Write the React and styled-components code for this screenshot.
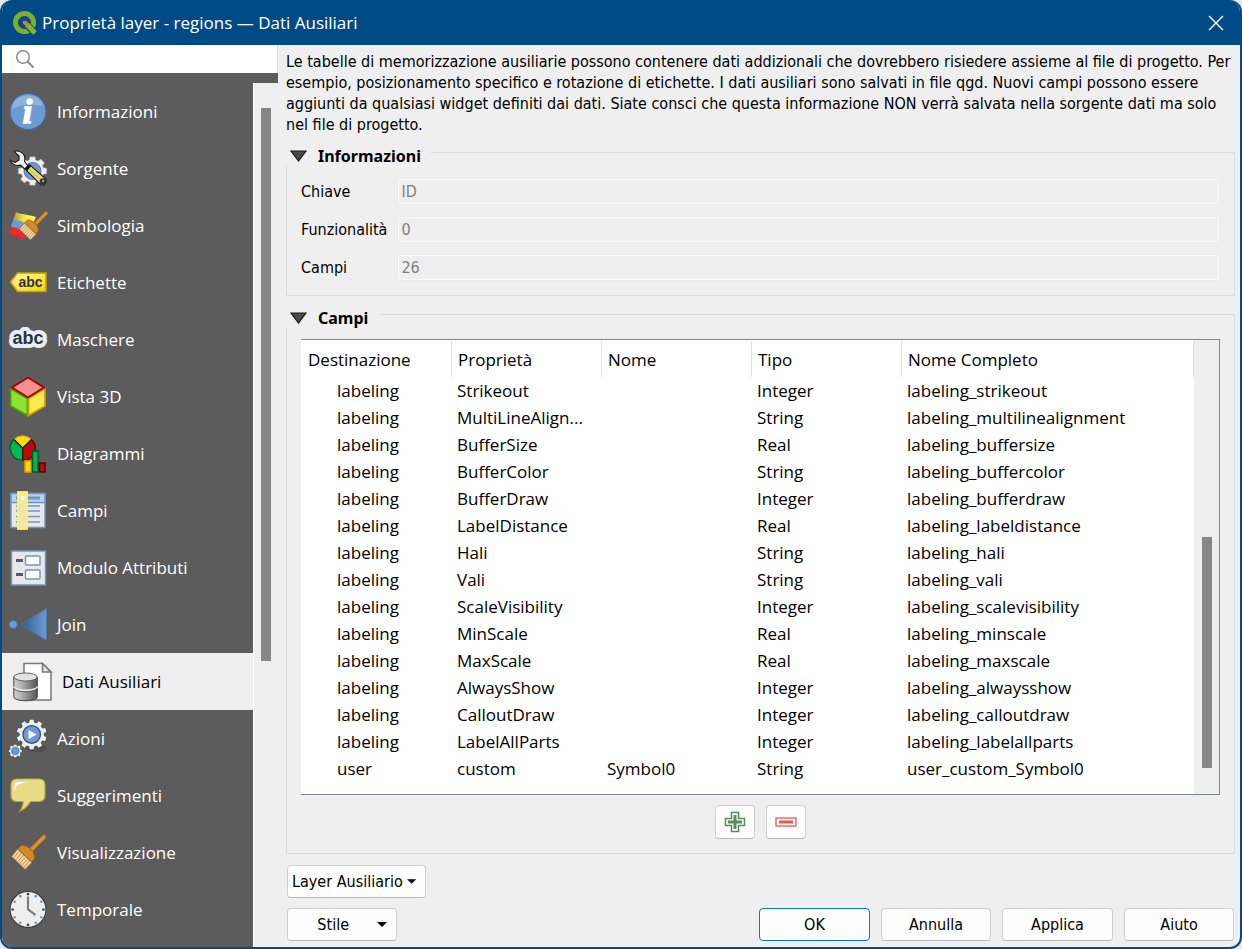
import React, { useState } from 'react';
import styled, { createGlobalStyle, css } from 'styled-components';

const uiFont = '"Open Sans", "Noto Sans", sans-serif';
const formFont = '"DejaVu Sans Condensed", "Noto Sans", sans-serif';

const GlobalStyle = createGlobalStyle`
    * {
        box-sizing: border-box;
    }

    body {
        margin: 0;
        background: #e6e9ec;
        color: #000;
        font-family: ${formFont};
        font-size: 16px;
    }

    button, input {
        font: inherit;
        color: inherit;
    }
`;

const Window = styled.div`
    display: flex;
    flex-direction: column;
    min-height: 100vh;
    border: 2px solid #004b85;
    border-top: 0;
    border-radius: 12px;
    overflow: hidden;
    background: #efefef;
`;

const TitleBar = styled.header`
    display: flex;
    align-items: center;
    gap: 4px;
    height: 45px;
    padding: 0 15px 0 10px;
    background: #004b85;
    color: #fff;
`;

const Title = styled.h1`
    flex: 1;
    margin: 0;
    font-family: ${uiFont};
    font-size: 17px;
    font-weight: 400;
`;

const CloseButton = styled.button`
    display: flex;
    padding: 0;
    border: 0;
    background: none;
`;

const Body = styled.div`
    display: flex;
    flex: 1;
`;

const Sidebar = styled.aside`
    display: flex;
    flex-direction: column;
    width: 276px;
    font-family: ${uiFont};
`;

const SearchBox = styled.label`
    display: flex;
    align-items: center;
    gap: 6px;
    height: 28px;
    padding-left: 13px;
    border-right: 1px solid #e0e0e0;
    background: #fff;
`;

const SearchInput = styled.input`
    flex: 1;
    min-width: 0;
    border: 0;
    outline: 0;
    background: none;
`;

const SidebarBody = styled.div`
    display: flex;
    flex: 1;
    border-top: 10px solid #5c5c5c;
`;

const Nav = styled.nav`
    flex: 1;
    background: #5c5c5c;
`;

const NavItem = styled.button`
    display: flex;
    align-items: center;
    gap: 9px;
    width: 100%;
    height: 57px;
    padding: 0 0 0 6px;
    border: 0;
    background: none;
    color: #fff;
    font-size: 17px;
    text-align: left;

    ${props => props.$active && css`
        padding-left: 11px;
        background: #efefef;
        color: #000;
    `}
`;

const Track = styled.div`
    display: flex;
    flex-direction: column;
    align-items: center;
    width: 25px;
    border-left: ${props => props.$edge ? '1px solid #fff' : '0'};
    background: #efefef;
`;

const Space = styled.div`
    flex: ${props => props.$size};
`;

const Thumb = styled.div`
    flex: ${props => props.$size};
    width: 10px;
    background: #868686;
`;

const Main = styled.main`
    display: flex;
    flex: 1;
    flex-direction: column;
    min-width: 0;
    padding: 6px 5px 6px 8px;
`;

const Description = styled.p`
    margin: 0 0 3px;
    line-height: 21px;
`;

const Group = styled.fieldset`
    display: flex;
    flex: ${props => props.$grow ? '1' : 'none'};
    flex-direction: column;
    min-width: 0;
    margin: 0 0 4px;
    padding: ${props => props.$grow ? '11px' : '12px'} 14px 14px;
    border: 1px solid #dcdcdc;
`;

const Legend = styled.legend`
    margin-left: -15px;
    padding: 8px 10px 0 0;
    background: #efefef;
`;

const LegendButton = styled.button`
    display: flex;
    align-items: center;
    gap: 11px;
    height: 20px;
    padding: 0 0 0 4px;
    border: 0;
    background: none;
    font-family: "Noto Sans", sans-serif;
    font-weight: 700;
`;

const InfoGrid = styled.div`
    display: grid;
    grid-template-columns: auto 1fr;
    align-items: center;
    gap: 11px 10px;
`;

const Value = styled.input`
    min-width: 0;
    height: 27px;
    padding: 0 2px;
    border: 2px solid #fafafa;
    outline: 1px solid #eaeaea;
    outline-offset: -1px;
    background: #efefef;
    color: #7f7f7f;
`;

const TableFrame = styled.div`
    display: flex;
    flex: 1;
    border: 1px solid #828790;
    border-left: 0;
    background: #fff;
`;

const TableArea = styled.div`
    flex: 1;
    min-width: 0;
    padding-top: 1px;
    font-family: ${uiFont};
`;

const Table = styled.table`
    width: 100%;
    border-collapse: separate;
    border-spacing: 0;
    table-layout: fixed;
`;

const Column = styled.col`
    width: ${props => props.$width || 'auto'};
`;

const HeadCell = styled.th`
    height: 36px;
    padding: 0 6px;
    border-right: 1px solid #e2e2e2;
    font-size: 17px;
    font-weight: 400;
    text-align: left;

    &:first-child {
        padding-left: 7px;
    }
`;

const Cell = styled.td`
    height: 27px;
    padding: 0 0 0 5px;
    font-size: 17px;
    line-height: 27px;
    white-space: nowrap;

    &:first-child {
        padding-left: 36px;
    }
`;

const TableTools = styled.div`
    display: flex;
    justify-content: center;
    gap: 11px;
    margin-top: 10px;
`;

const Button = styled.button`
    display: flex;
    align-items: center;
    justify-content: center;
    width: ${props => props.$width || 'auto'};
    height: 33px;
    padding: 0 5px;
    border: 1px solid ${props => props.$primary ? '#0078d4' : '#d0d0d0'};
    border-bottom-color: ${props => props.$primary ? '#0078d4' : '#bababa'};
    border-radius: 4px;
    background: #fdfdfd;
    white-space: nowrap;
`;

const ToolButton = styled(Button)`
    width: 40px;
    height: 34px;
`;

const MenuButton = styled(Button)`
    gap: ${props => props.$gap};
    padding: 0 9px 0 4px;
    justify-content: flex-end;
`;

const Footer = styled.footer`
    display: flex;
    flex-direction: column;
    gap: 10px;
    padding: 7px 1px 0;
`;

const FooterRow = styled.div`
    display: flex;
    gap: 11px;
`;

const Filler = styled.div`
    flex: 1;
`;

const gearPath = (cx, cy, outer, inner, teeth) => {
    const step = (Math.PI * 2) / teeth;
    const point = (r, a) => `${(cx + r * Math.cos(a)).toFixed(2)} ${(cy + r * Math.sin(a)).toFixed(2)}`;
    let d = '';

    for (let i = 0; i < teeth; i++) {
        const a = i * step - Math.PI / 2;
        d += `${i ? 'L' : 'M'}${point(inner, a - step * 0.36)}`;
        d += `L${point(outer, a - step * 0.24)}L${point(outer, a + step * 0.24)}`;
        d += `L${point(inner, a + step * 0.36)}`;
    }

    return d + 'Z';
};

const Icon = ({ children }) => (
    <svg width="40" height="40" viewBox="0 0 40 40" aria-hidden="true">{children}</svg>
);

const InfoIcon = () => (
    <Icon>
        <circle cx="20" cy="19.500" r="18" fill="#6d9bd1" stroke="#3e66a3" />
        <path d="M4 17C5 8 12 3.500 20 3.500S34 8 35 14C27 12 12 12 4 17Z" fill="#a9c6e8" opacity=".55" />
        <text x="19.500" y="31" textAnchor="middle" fontFamily="Liberation Serif, serif" fontSize="34" fontWeight="700" fontStyle="italic" fill="#fff" stroke="#fff" strokeWidth="1.500">i</text>
    </Icon>
);

const SourceIcon = () => (
    <Icon>
        <path d={gearPath(24.5, 22, 14.5, 11.5, 8)} fill="#eeeeec" stroke="#999" strokeWidth=".6" />
        <circle cx="24.500" cy="22" r="8.500" fill="#6d9bd1" stroke="#4b77ad" />
        <path d="M6 2.500C10 1 15 3 16.500 7C17 9 17 11 16.500 12.500L20 17L16.500 20L12.500 16C8 17.500 3.500 15.500 2 11L7 13.500L11 11L11 7Z" fill="#eeeeec" stroke="#222" strokeWidth="1.200" strokeLinejoin="round" />
        <path d="M18 21L22 16L38 30C39 34 36 37 33 36Z" fill="#e9d778" stroke="#222" strokeWidth="1.200" />
        <path d="M21 20L34 32" stroke="#c9b550" fill="none" />
        <path d="M18 21L22 16" stroke="#111" strokeWidth="3" />
        <circle cx="35" cy="32.500" r="3.300" fill="#333" />
        <circle cx="35" cy="32" r="1.300" fill="#999" />
    </Icon>
);

const Brush = () => (
    <>
        <path d="M36 4L23 17" stroke="#9a621a" strokeWidth="5" strokeLinecap="round" />
        <path d="M36 4L23 17" stroke="#d9932f" strokeWidth="3.500" strokeLinecap="round" />
        <path d="M13 12.500C16 11 18 14 21 14.500L25.500 19C25 22 28 23 26.500 26L23.500 29L9.500 16Z" fill="#cf8a22" stroke="#8a5510" strokeWidth=".8" />
        <path d="M9.500 16L24 29.500L17 36.500L3.500 23.500Z" fill="#f0d3a0" stroke="#8f5b17" strokeWidth=".8" />
        <path d="M11.500 18L5.500 25M13.500 20L7.500 27M15.500 22L9.500 29M17.500 24L11.500 31M19.500 26L13.500 33M21.500 28L15.500 35" stroke="#b98442" strokeWidth=".8" />
    </>
);

const SymbologyIcon = () => (
    <Icon>
        <defs>
            <linearGradient id="flagYellow" x1="0" x2="1">
                <stop offset="0" stopColor="#a59648" />
                <stop offset=".5" stopColor="#fde73c" />
                <stop offset="1" stopColor="#fdf07b" />
            </linearGradient>
        </defs>
        <path d="M8 6C14 9 20 8 28 11L24 20L5 14Z" fill="url(#flagYellow)" />
        <path d="M5 14C10 14 16 16 22 19L18 27L3 21Z" fill="#6d9bd1" />
        <path d="M3 21C8 21 13 24 19 27L15 34C10 30 6 30 1 28Z" fill="#ef2929" />
        <g transform="translate(8.500 4) scale(.82)">
            <Brush />
        </g>
    </Icon>
);

const LabelsIcon = () => (
    <Icon>
        <defs>
            <linearGradient id="tagFill" x1="0" y1="0" x2="1" y2="1">
                <stop offset="0" stopColor="#fff5a0" />
                <stop offset=".5" stopColor="#fce94f" />
                <stop offset="1" stopColor="#edd400" />
            </linearGradient>
        </defs>
        <path d="M2.500 19L9.500 10H38V28.500H9.500Z" fill="url(#tagFill)" stroke="#c4a000" strokeWidth="1.500" />
        <text x="22.500" y="23.500" textAnchor="middle" fontFamily="Liberation Sans, sans-serif" fontSize="14" fontWeight="700" fill="#2e3436">abc</text>
    </Icon>
);

const MasksIcon = () => (
    <Icon>
        <text x="20" y="23.500" textAnchor="middle" fontFamily="Liberation Sans, sans-serif" fontSize="18" fontWeight="700" fill="#2e3436" stroke="#e9ecfc" strokeWidth="8" strokeLinejoin="round" paintOrder="stroke">abc</text>
    </Icon>
);

const CubeIcon = () => (
    <Icon>
        <path d="M2.500 11.500L19.500 21.500V38.500L2.500 29Z" fill="#8ae234" stroke="#4e9a06" strokeWidth="1.800" />
        <path d="M37 11.500L20.500 21.500V38.500L37 29Z" fill="#fce94f" stroke="#c4a000" strokeWidth="1.800" />
        <path d="M20 .5L36 10.500L20 20.500L4 10.500Z" fill="#f88f8f" stroke="#a40000" strokeWidth="1.800" />
    </Icon>
);

const DiagramsIcon = () => (
    <Icon>
        <path d="M14.700 14.200L6 5.500A12 12 0 0 1 23.400 5.500Z" fill="#ffdd00" stroke="#e89b0c" />
        <path d="M14.700 14.200L23.400 5.500A12 12 0 0 1 14.700 26.200Z" fill="#c00a0a" stroke="#5c0000" strokeWidth="1.200" />
        <path d="M14.700 14.200L6 5.500A12 12 0 0 0 14.700 26.200Z" fill="#00b552" stroke="#04562b" strokeWidth="1.200" />
        <path d="M6.500 6L14.700 14.200L23 6M14.700 14.200V26" fill="none" stroke="#222" strokeWidth="1.200" />
        <rect x="17" y="27" width="6" height="11" fill="#ffdd00" stroke="#e89b0c" strokeWidth="1.500" />
        <rect x="24.500" y="17" width="5.500" height="21" fill="#00b552" stroke="#04562b" strokeWidth="1.500" />
        <rect x="31.500" y="29" width="5.500" height="9" fill="#c00a0a" stroke="#5c0000" strokeWidth="1.500" />
    </Icon>
);

const FieldsIcon = () => (
    <Icon>
        <rect x="3" y="2.500" width="34" height="34" fill="#e8e8e8" stroke="#6d97c4" strokeWidth="1.500" />
        <rect x="3" y="2.500" width="34" height="9" fill="#b6d3ee" stroke="#6d97c4" strokeWidth="1.500" />
        <path d="M8 7H32" stroke="#6d97c4" strokeWidth="3" />
        <path d="M8 15H32M8 20H32M8 25.500H32M8 31H32" stroke="#6d97c4" strokeWidth="1.500" />
        <rect x="10" y="1" width="9" height="37" fill="#f0e3b8" stroke="#fdf557" strokeWidth="1.800" />
        <rect x="13" y="5.500" width="3.500" height="3.500" fill="#fff" />
    </Icon>
);

const FormIcon = () => (
    <Icon>
        <rect x="3.500" y="3" width="34" height="34" fill="#e8e8e8" stroke="#6d97c4" strokeWidth="1.500" />
        <path d="M8 12.500H15M8 26.500H15" stroke="#47607f" strokeWidth="3" />
        <rect x="17.500" y="8" width="14.500" height="9" rx="1" fill="#fff" stroke="#6d97c4" strokeWidth="1.500" />
        <rect x="17.500" y="22" width="14.500" height="9" rx="1" fill="#fff" stroke="#6d97c4" strokeWidth="1.500" />
    </Icon>
);

const JoinIcon = () => (
    <Icon>
        <defs>
            <linearGradient id="joinFill" x1="0" x2="1">
                <stop offset="0" stopColor="#2f5d90" />
                <stop offset="1" stopColor="#6d9bd1" />
            </linearGradient>
        </defs>
        <circle cx="5.300" cy="19.500" r="4" fill="#6d9bd1" stroke="#4377b0" />
        <path d="M12.700 19.500L38.500 3.500V35.500Z" fill="url(#joinFill)" stroke="#4377b0" strokeWidth=".8" />
    </Icon>
);

const AuxiliaryIcon = () => (
    <Icon>
        <defs>
            <linearGradient id="diskFill" x1="0" x2="1">
                <stop offset="0" stopColor="#cfcfcf" />
                <stop offset=".3" stopColor="#b5b5b5" />
                <stop offset="1" stopColor="#555" />
            </linearGradient>
        </defs>
        <path d="M11 1.500H29.500L38 10V38H11Z" fill="#fff" stroke="#777" strokeWidth="1.500" />
        <path d="M29.500 1.500V10H38Z" fill="#e6e6e6" stroke="#777" strokeWidth="1.500" />
        <path d="M.8 15V35C1 40 24 40 24.300 35V15Z" fill="url(#diskFill)" stroke="#444" />
        <path d="M.8 24.500C1 29.500 24 29.500 24.300 24.500" fill="none" stroke="#eee" strokeWidth="1.500" />
        <path d="M.8 26C1 31 24 31 24.300 26" fill="none" stroke="#555" strokeWidth=".8" />
        <ellipse cx="12.500" cy="15" rx="11.700" ry="4" fill="#e3e3e3" stroke="#555" strokeWidth=".9" />
    </Icon>
);

const ActionsIcon = () => (
    <Icon>
        <ellipse cx="28" cy="29" rx="11" ry="4" fill="#444" opacity=".5" />
        <path d={gearPath(23.7, 15.5, 15.5, 12.5, 10)} fill="#eeeeec" stroke="#444" strokeWidth=".8" />
        <circle cx="23.700" cy="15.500" r="8.800" fill="#6d9bd1" stroke="#2a4a75" strokeWidth="1.200" />
        <path d="M20.500 11L28.500 15.500L20.500 20Z" fill="#fff" />
        <path d={gearPath(7.3, 32, 6.9, 5.6, 8)} fill="#eeeeec" stroke="#444" strokeWidth=".6" />
        <circle cx="7.300" cy="32" r="3.800" fill="#6d9bd1" stroke="#35618f" strokeWidth=".6" />
    </Icon>
);

const TipsIcon = () => (
    <Icon>
        <path d="M9 3H31Q37 3 37 9V19.500Q37 25.500 31 25.500H22.500Q19 32 12 35Q15.500 30 15 25.500H9Q3 25.500 3 19.500V9Q3 3 9 3Z" fill="#e8dc84" stroke="#bda438" strokeWidth="1.200" />
        <path d="M6.500 17V10Q6.500 6 11 6H20Q13 7 10 9T6.500 17Z" fill="#fff" />
    </Icon>
);

const DisplayIcon = () => (
    <Icon>
        <Brush />
    </Icon>
);

const hours = [0, 1, 2, 3, 4, 5, 6, 7, 8, 9, 10, 11];

const ClockIcon = () => (
    <Icon>
        <circle cx="20" cy="19.500" r="18" fill="#eeeeec" stroke="#3a3a3a" strokeWidth="1.200" />
        {hours.map(hour => (
            <circle
                key={hour}
                cx={20 + 15.4 * Math.sin(hour * Math.PI / 6)}
                cy={19.5 - 15.4 * Math.cos(hour * Math.PI / 6)}
                r="1.300"
                fill={hour % 3 ? '#6d9bd1' : '#2b4468'}
            />
        ))}
        <path d="M20 6.500V19.500L27.500 25" fill="none" stroke="#7d8081" strokeWidth="2.200" />
    </Icon>
);

const LogoIcon = () => (
    <svg width="26" height="26" viewBox="0 0 26 26" aria-hidden="true">
        <circle cx="12.500" cy="12.500" r="9" fill="none" stroke="#7fae2c" strokeWidth="5" />
        <path d="M14 14L24 24" stroke="#004b85" strokeWidth="7" />
        <path d="M15 14.500L23 23" stroke="#84b52f" strokeWidth="5" />
        <path d="M11 11H15L17 15L14 16L11 14Z" fill="#ee7913" />
    </svg>
);

const CloseIcon = () => (
    <svg width="18" height="18" viewBox="0 0 18 18" aria-hidden="true">
        <path d="M2 2L16 16M16 2L2 16" stroke="#fff" strokeWidth="1.400" />
    </svg>
);

const SearchIcon = () => (
    <svg width="20" height="20" viewBox="0 0 20 20" aria-hidden="true">
        <circle cx="8" cy="8" r="6.300" fill="none" stroke="#8a8a8a" strokeWidth="1.500" />
        <path d="M12.500 12.500L18.500 18.500" stroke="#8a8a8a" strokeWidth="2" />
    </svg>
);

const CollapseIcon = () => (
    <svg width="17" height="12" viewBox="0 0 17 12" aria-hidden="true">
        <path d="M1 1H16L8.500 11Z" fill="#4a4a4a" stroke="#1a1a1a" strokeWidth="1.200" />
    </svg>
);

const Caret = () => (
    <svg width="10" height="10" viewBox="0 0 10 10" aria-hidden="true">
        <path d="M0 2H10L5 7Z" fill="#000" />
    </svg>
);

const PlusIcon = () => (
    <svg width="22" height="22" viewBox="0 0 22 22" aria-hidden="true">
        <path d="M7.500 1.500H14.500V7.500H20.500V14.500H14.500V20.500H7.500V14.500H1.500V7.500H7.500Z" fill="#fff" stroke="#5a8c5a" strokeWidth="1.500" />
        <path d="M11 4V18M4 11H18" stroke="#5a8c5a" strokeWidth="3" />
    </svg>
);

const MinusIcon = () => (
    <svg width="22" height="22" viewBox="0 0 22 22" aria-hidden="true">
        <rect x="1" y="7" width="20" height="8" fill="#fff" stroke="#ef5350" strokeWidth="1.300" />
        <path d="M4 11H18" stroke="#ef5350" strokeWidth="3" />
    </svg>
);

const pages = [
    { label: 'Informazioni', icon: InfoIcon },
    { label: 'Sorgente', icon: SourceIcon },
    { label: 'Simbologia', icon: SymbologyIcon },
    { label: 'Etichette', icon: LabelsIcon },
    { label: 'Maschere', icon: MasksIcon },
    { label: 'Vista 3D', icon: CubeIcon },
    { label: 'Diagrammi', icon: DiagramsIcon },
    { label: 'Campi', icon: FieldsIcon },
    { label: 'Modulo Attributi', icon: FormIcon },
    { label: 'Join', icon: JoinIcon },
    { label: 'Dati Ausiliari', icon: AuxiliaryIcon },
    { label: 'Azioni', icon: ActionsIcon },
    { label: 'Suggerimenti', icon: TipsIcon },
    { label: 'Visualizzazione', icon: DisplayIcon },
    { label: 'Temporale', icon: ClockIcon },
];

const info = [
    { id: 'key', label: 'Chiave', value: 'ID' },
    { id: 'features', label: 'Funzionalità', value: '0' },
    { id: 'fields', label: 'Campi', value: '26' },
];

const columns = ['Destinazione', 'Proprietà', 'Nome', 'Tipo', 'Nome Completo'];

const fields = [
    ['labeling', 'Strikeout', '', 'Integer', 'labeling_strikeout'],
    ['labeling', 'MultiLineAlign...', '', 'String', 'labeling_multilinealignment'],
    ['labeling', 'BufferSize', '', 'Real', 'labeling_buffersize'],
    ['labeling', 'BufferColor', '', 'String', 'labeling_buffercolor'],
    ['labeling', 'BufferDraw', '', 'Integer', 'labeling_bufferdraw'],
    ['labeling', 'LabelDistance', '', 'Real', 'labeling_labeldistance'],
    ['labeling', 'Hali', '', 'String', 'labeling_hali'],
    ['labeling', 'Vali', '', 'String', 'labeling_vali'],
    ['labeling', 'ScaleVisibility', '', 'Integer', 'labeling_scalevisibility'],
    ['labeling', 'MinScale', '', 'Real', 'labeling_minscale'],
    ['labeling', 'MaxScale', '', 'Real', 'labeling_maxscale'],
    ['labeling', 'AlwaysShow', '', 'Integer', 'labeling_alwaysshow'],
    ['labeling', 'CalloutDraw', '', 'Integer', 'labeling_calloutdraw'],
    ['labeling', 'LabelAllParts', '', 'Integer', 'labeling_labelallparts'],
    ['user', 'custom', 'Symbol0', 'String', 'user_custom_Symbol0'],
];

const FieldsTable = () => (
    <TableFrame>
        <TableArea>
            <Table>
                <colgroup>
                    <Column $width="151px" />
                    <Column $width="150px" />
                    <Column $width="150px" />
                    <Column $width="150px" />
                    <Column />
                </colgroup>
                <thead>
                    <tr>
                        {columns.map(column => <HeadCell key={column} scope="col">{column}</HeadCell>)}
                    </tr>
                </thead>
                <tbody>
                    {fields.map(row => (
                        <tr key={row[4]}>
                            {row.map((text, i) => <Cell key={i}>{text}</Cell>)}
                        </tr>
                    ))}
                </tbody>
            </Table>
        </TableArea>
        <Track>
            <Space $size={197} />
            <Thumb $size={231} />
            <Space $size={26} />
        </Track>
    </TableFrame>
);

const App = () => {
    const [page, setPage] = useState('Dati Ausiliari');

    return (
        <Window>
            <GlobalStyle />
            <TitleBar>
                <LogoIcon />
                <Title>Proprietà layer - regions — Dati Ausiliari</Title>
                <CloseButton type="button" aria-label="Chiudi"><CloseIcon /></CloseButton>
            </TitleBar>
            <Body>
                <Sidebar>
                    <SearchBox>
                        <SearchIcon />
                        <SearchInput type="search" aria-label="Cerca" />
                    </SearchBox>
                    <SidebarBody>
                        <Nav>
                            {pages.map(({ label, icon: PageIcon }) => (
                                <NavItem
                                    key={label}
                                    type="button"
                                    $active={label === page}
                                    onClick={() => setPage(label)}
                                >
                                    <PageIcon />
                                    {label}
                                </NavItem>
                            ))}
                        </Nav>
                        <Track $edge>
                            <Space $size={25} />
                            <Thumb $size={553} />
                            <Space $size={286} />
                        </Track>
                    </SidebarBody>
                </Sidebar>
                <Main>
                    <Description>
                        Le tabelle di memorizzazione ausiliarie possono contenere dati addizionali che dovrebbero risiedere assieme al file di progetto. Per esempio, posizionamento specifico e rotazione di etichette. I dati ausiliari sono salvati in file qgd. Nuovi campi possono essere aggiunti da qualsiasi widget definiti dai dati. Siate consci che questa informazione NON verrà salvata nella sorgente dati ma solo nel file di progetto.
                    </Description>
                    <Group>
                        <Legend>
                            <LegendButton type="button"><CollapseIcon />Informazioni</LegendButton>
                        </Legend>
                        <InfoGrid>
                            {info.map(({ id, label, value }) => (
                                <React.Fragment key={id}>
                                    <label htmlFor={id}>{label}</label>
                                    <Value id={id} value={value} disabled readOnly />
                                </React.Fragment>
                            ))}
                        </InfoGrid>
                    </Group>
                    <Group $grow>
                        <Legend>
                            <LegendButton type="button"><CollapseIcon />Campi</LegendButton>
                        </Legend>
                        <FieldsTable />
                        <TableTools>
                            <ToolButton type="button" aria-label="Aggiungi campo"><PlusIcon /></ToolButton>
                            <ToolButton type="button" aria-label="Rimuovi campo"><MinusIcon /></ToolButton>
                        </TableTools>
                    </Group>
                    <Footer>
                        <FooterRow>
                            <MenuButton type="button" $width="139px" $gap="4px">Layer Ausiliario<Caret /></MenuButton>
                        </FooterRow>
                        <FooterRow>
                            <MenuButton type="button" $width="110px" $gap="28px">Stile<Caret /></MenuButton>
                            <Filler />
                            <Button type="button" $width="111px" $primary>OK</Button>
                            <Button type="button" $width="110px">Annulla</Button>
                            <Button type="button" $width="111px">Applica</Button>
                            <Button type="button" $width="110px">Aiuto</Button>
                        </FooterRow>
                    </Footer>
                </Main>
            </Body>
        </Window>
    );
};

export default App;
